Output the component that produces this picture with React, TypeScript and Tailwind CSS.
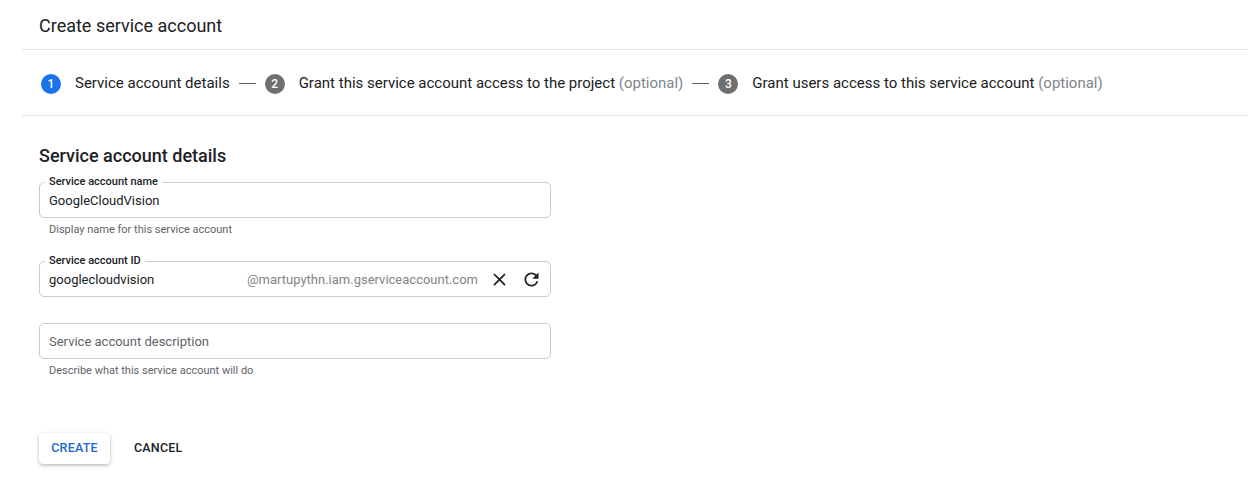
import { MdClose, MdRefresh } from 'react-icons/md';

function Step({ n, label, optional, active }: { n: number; label: string; optional?: boolean; active?: boolean }) {
    return (
        <div className="flex items-center gap-[14px]">
            <span
                className={`w-[20px] h-[20px] rounded-full flex items-center justify-center text-white text-[12px] font-medium ${active ? 'bg-[#1a73e8]' : 'bg-[#6f6f6f]'}`}
            >
                {n}
            </span>
            <span className="text-[15px] text-[#202124] whitespace-nowrap">
                {label}
                {optional && <span className="text-[#80868b]"> (optional)</span>}
            </span>
        </div>
    );
}

function Dash() {
    return <span className="w-[17px] h-px bg-[#5f6368] mx-[9px]" />;
}

function Field({ label, children }: { label?: string; children: React.ReactNode }) {
    return (
        <div className="relative w-[512px] h-[36px] border border-[#c9cbcf] rounded-[5px] flex items-center pl-[9px] pr-[8px]">
            {label && (
                <span className="absolute -top-[9px] left-[5px] px-[4px] bg-white text-[11px] font-medium leading-[16px] text-[#202124]">
                    {label}
                </span>
            )}
            {children}
        </div>
    );
}

export default function App() {
    return (
        <div className="w-[1258px] h-[477px] bg-white font-['Roboto',sans-serif] text-[#202124] overflow-hidden">
            <div className="ml-[22px] mr-[10px]">
                <div className="h-[50px] border-b border-[#e3e3e3] pl-[17px] pt-[2px] flex items-center">
                    <h1 className="text-[18px] leading-[24px]">Create service account</h1>
                </div>
                <div className="h-[66px] border-b border-[#e3e3e3] pl-[19px] pt-[2px] flex items-center">
                    <Step n={1} label="Service account details" active />
                    <Dash />
                    <Step n={2} label="Grant this service account access to the project" optional />
                    <Dash />
                    <Step n={3} label="Grant users access to this service account" optional />
                </div>
            </div>

            <div className="pl-[39px]">
                <h2 className="mt-[28px] text-[18px] leading-[24px] font-medium">Service account details</h2>

                <div className="mt-[14px]">
                    <Field label="Service account name">
                        <span className="text-[13px] pt-px">GoogleCloudVision</span>
                    </Field>
                    <p className="mt-[4px] ml-[10px] text-[11px] leading-[16px] text-[#5f6368]">Display name for this service account</p>
                </div>

                <div className="mt-[23px]">
                    <Field label="Service account ID">
                        <span className="text-[13px] pt-px flex-1">googlecloudvision</span>
                        <span className="text-[13px] pt-px text-[#80868b]">@martupythn.iam.gserviceaccount.com</span>
                        <MdClose className="ml-[11px] w-[21px] h-[21px] text-[#202124]" />
                        <MdRefresh className="ml-[11px] w-[21px] h-[21px] text-[#202124]" />
                    </Field>
                </div>

                <div className="mt-[26px]">
                    <Field>
                        <span className="text-[13px] pt-px text-[#5f6368]">Service account description</span>
                    </Field>
                    <p className="mt-[4px] ml-[10px] text-[11px] leading-[16px] text-[#5f6368]">Describe what this service account will do</p>
                </div>

                <div className="mt-[54px] flex items-center gap-[8px]">
                    <button className="h-[31px] w-[71px] rounded-[4px] bg-white shadow-[0_1px_3px_rgba(60,64,67,0.3),0_2px_5px_rgba(60,64,67,0.12)] text-[12.5px] font-medium text-[#1967d2] tracking-[0.2px]">
                        CREATE
                    </button>
                    <button className="h-[31px] px-[16px] text-[12.5px] font-medium text-[#202124] tracking-[0.2px]">CANCEL</button>
                </div>
            </div>
        </div>
    );
}
